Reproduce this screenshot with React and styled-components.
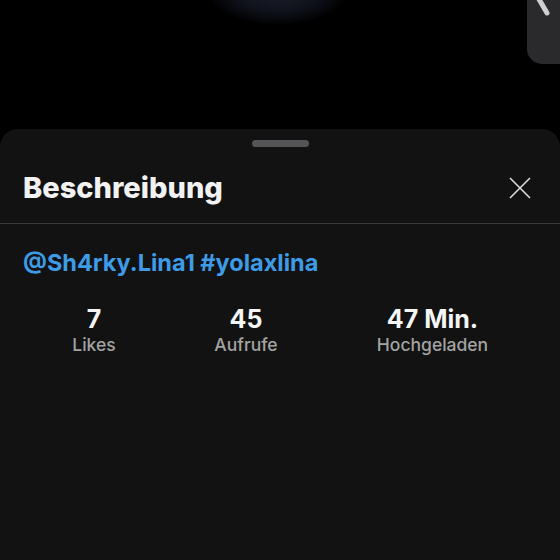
import React from 'react';
import styled, { createGlobalStyle } from 'styled-components';

const GlobalStyle = createGlobalStyle`
    html, body {
        margin: 0;
        padding: 0;
        background: #000000;
    }
    body {
        font-family: Inter, "Liberation Sans", sans-serif;
    }
`;

const Page = styled.div`
    width: 560px;
    height: 560px;
    display: flex;
    flex-direction: column;
    background: #000000;
    overflow: hidden;
`;

const VideoArea = styled.div`
    position: relative;
    height: 129px;
    flex-shrink: 0;
`;

const Glow = styled.div`
    position: absolute;
    left: 210px;
    top: -40px;
    width: 136px;
    height: 64px;
    border-radius: 50%;
    background: radial-gradient(ellipse at center, #1b1e2b 0%, #0f111a 45%, rgba(0, 0, 0, 0) 75%);
`;

const CornerButton = styled.div`
    position: absolute;
    right: 0;
    top: 0;
    width: 33px;
    height: 64px;
    background: #2a2a2c;
    border-bottom-left-radius: 15px;
    overflow: hidden;
`;

const Sheet = styled.div`
    flex: 1;
    background: #121212;
    border-radius: 18px 18px 0 0;
    display: flex;
    flex-direction: column;
`;

const Handle = styled.div`
    align-self: center;
    width: 57px;
    height: 7px;
    margin-top: 11px;
    border-radius: 4px;
    background: #555557;
`;

const Header = styled.div`
    height: 76px;
    display: flex;
    align-items: center;
    justify-content: space-between;
    padding: 5px 28px 0 23px;
    box-sizing: border-box;
`;

const Title = styled.h2`
    margin: 0;
    font-size: 29px;
    font-weight: 800;
    color: #f2f2f2;
    letter-spacing: 0;
`;

const CloseButton = styled.button`
    background: none;
    border: none;
    padding: 0;
    width: 24px;
    height: 24px;
    display: flex;
    align-items: center;
    justify-content: center;
    color: #dcdcdc;
`;

const Divider = styled.div`
    height: 1px;
    background: #3a3a3c;
`;

const Body = styled.div`
    padding: 25px 23px 0;
    display: flex;
    flex-direction: column;
`;

const Tags = styled.div`
    font-size: 23.5px;
    font-weight: 700;
    color: #3e9be6;
    line-height: 28px;
`;

const Stats = styled.div`
    display: flex;
    margin-top: 28px;
    padding-left: 48px;
    gap: 95px;
`;

const Stat = styled.div`
    display: flex;
    flex-direction: column;
    align-items: center;
    width: ${p => p.$w}px;
`;

const Value = styled.div`
    font-size: 25px;
    font-weight: 700;
    color: #f5f5f5;
    line-height: 28px;
`;

const Label = styled.div`
    font-size: 17.5px;
    font-weight: 500;
    color: #a3a3a3;
    line-height: 24px;
`;

const stats = [
    { value: '7', label: 'Likes', w: 46 },
    { value: '45', label: 'Aufrufe', w: 68 },
    { value: '47 Min.', label: 'Hochgeladen', w: 115 },
];

export default function App() {
    return (
        <Page>
            <GlobalStyle />
            <VideoArea>
                <Glow />
                <CornerButton>
                    <svg width="33" height="64" viewBox="0 0 33 64">
                        <line x1="9" y1="-6" x2="20" y2="13" stroke="#cfcfcf" strokeWidth="5" strokeLinecap="round" />
                    </svg>
                </CornerButton>
            </VideoArea>
            <Sheet>
                <Handle />
                <Header>
                    <Title>Beschreibung</Title>
                    <CloseButton>
                        <svg width="22" height="22" viewBox="0 0 22 22">
                            <path d="M1 1 L21 21 M21 1 L1 21" stroke="currentColor" strokeWidth="1.6" fill="none" />
                        </svg>
                    </CloseButton>
                </Header>
                <Divider />
                <Body>
                    <Tags>@Sh4rky.Lina1 #yolaxlina</Tags>
                    <Stats>
                        {stats.map(s => (
                            <Stat key={s.label} $w={s.w}>
                                <Value>{s.value}</Value>
                                <Label>{s.label}</Label>
                            </Stat>
                        ))}
                    </Stats>
                </Body>
            </Sheet>
        </Page>
    );
}
